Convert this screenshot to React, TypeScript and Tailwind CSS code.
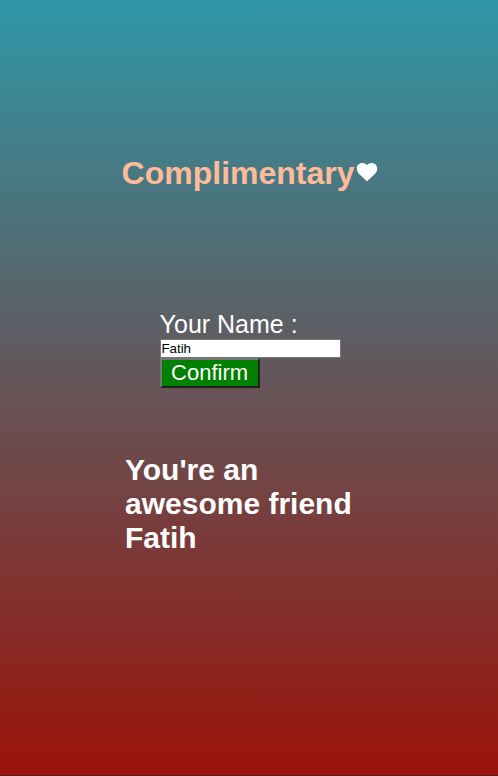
import { useState } from "react";

export default function App() {
  const [name, setName] = useState("Fatih");
  return (
    <main className="flex h-[776px] w-full flex-col border-b border-[#44201e] bg-linear-to-b from-[#2f97a7] to-[#9b1209] [--tw-gradient-position:to_bottom] font-['Liberation_Sans',Arial,sans-serif] text-white">
      <header className="mt-[155px] ml-[121.6px] flex h-9 items-center">
        <h1 className="text-[32px] leading-9 font-bold text-[#ffbb99]">Complimentary</h1>
        <svg viewBox="0 0 24 24" className="mb-[3px] ml-[0.2px] size-6 shrink-0 fill-white">
          <path d="M12 21.4C10.8 20.2 8.4 18.1 5.8 15.6C3.2 13.1 1.8 11.2 1.8 8.4C1.8 5.3 4.2 3 7.3 3C9.2 3 10.8 3.8 12 5C13.2 3.8 14.8 3 16.7 3C19.8 3 22.2 5.3 22.2 8.4C22.2 11.2 20.8 13.1 18.2 15.6C15.6 18.1 13.2 20.2 12 21.4Z" />
        </svg>
      </header>
      <form className="mt-[119px] ml-[159.6px] flex flex-col items-start" onSubmit={(e) => e.preventDefault()}>
        <label htmlFor="name" className="text-[25px] leading-[29px]">Your Name :</label>
        <input
          id="name"
          value={name}
          onChange={(e) => setName(e.target.value)}
          className="h-[19px] w-[181px] border border-[#767676] bg-white py-0 pr-0 pl-[0.8px] text-[13.333px] text-black outline-none"
        />
        <button className="h-[30px] w-[100px] border-2 border-t-[#767676] border-r-[#212121] border-b-[#212121] border-l-[#767676] bg-[green] text-[22px] leading-6 text-white">
          Confirm
        </button>
      </form>
      <h2 className="mt-[65px] ml-[125px] w-[250px] text-[30px] leading-[34px] font-bold">
        You're an awesome friend {name}
      </h2>
    </main>
  );
}
